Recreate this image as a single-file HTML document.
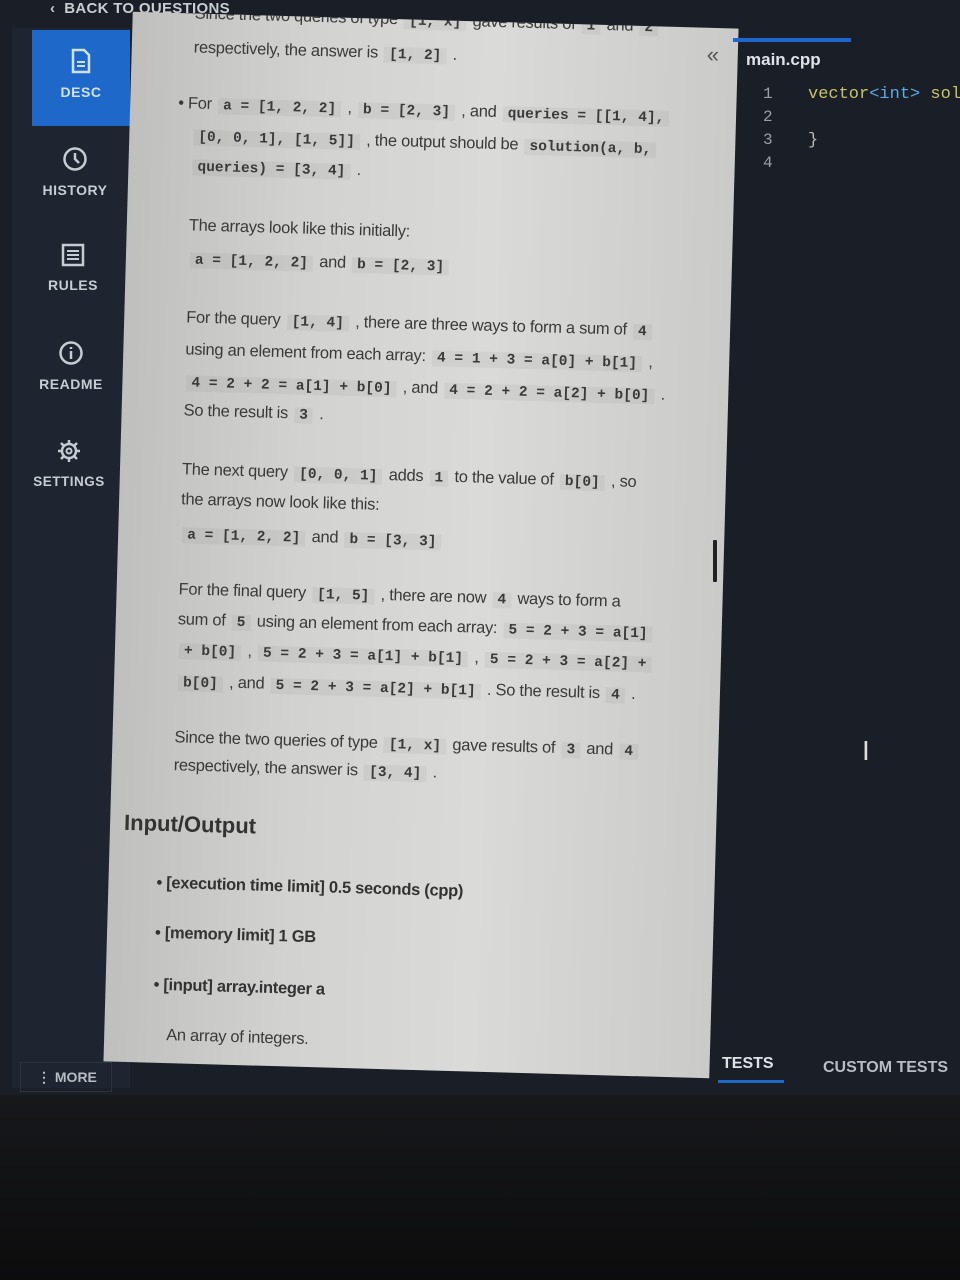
<!DOCTYPE html>
<html><head><meta charset="utf-8">
<style>
*{margin:0;padding:0;box-sizing:border-box}
body{width:960px;height:1280px;background:#111214;position:relative;overflow:hidden;font-family:"Liberation Sans",sans-serif}
.screen{position:absolute;left:0;top:0;width:960px;height:1095px;background:#1a1f27}
.bottom{position:absolute;left:0;top:1095px;width:960px;height:185px;background:linear-gradient(#17181b,#0c0c0d)}
.top{position:absolute;left:50px;top:0;color:#c9ccd2;font-weight:bold;font-size:15px;letter-spacing:.3px}
.side{position:absolute;left:12px;top:28px;width:118px;height:1060px;background:#1e2530}
.tab{position:absolute;width:98px;left:20px;height:96px;color:#c7ccd4;font-size:14px;font-weight:bold;text-align:center;letter-spacing:.5px}
.tab svg{display:block;margin:18px auto 10px}
.desc{background:#1e68c9;color:#cfe0f5}
.panel{position:absolute;left:118px;top:20px;width:606px;height:1050px;transform:rotate(1.6deg);transform-origin:50% 50%;background:linear-gradient(90deg,#bfbfbd,#d2d2d0 30%,#dadad8 60%,#cacac8);overflow:hidden;color:#3a3a3a;font-size:16.5px;letter-spacing:-.3px}
.c{font-family:"Liberation Mono",monospace;font-weight:bold;font-size:14.5px;color:#3a3a3a;letter-spacing:0;padding:0 5px;margin:0 2px;background:rgba(0,0,0,.04)}
p{position:absolute;line-height:29px;white-space:nowrap}
.h{font-size:22px;font-weight:bold;color:#333;letter-spacing:0}
.b{font-weight:bold;color:#333}
.ed{position:absolute;left:733px;top:38px;width:118px;height:4px;background:#1e68c9}
.fn{position:absolute;left:746px;top:50px;color:#dfe3e8;font-weight:bold;font-size:17px}
.ln{position:absolute;left:763px;color:#9aa0a8;font-family:"Liberation Mono",monospace;font-size:16px;line-height:23px;top:83px}
.code{position:absolute;left:808px;top:83px;font-family:"Liberation Mono",monospace;font-size:17px;line-height:23px;color:#c8c26a;white-space:pre}
</style></head><body>
<div class="screen"></div>
<div class="bottom"></div>
<div class="top">‹ &nbsp;BACK TO QUESTIONS</div>
<div class="side"></div>
<div class="tab desc" style="left:32px;top:30px"><svg width="22" height="26" viewBox="0 0 22 26"><path d="M3 2h11l5 5v17H3z" fill="none" stroke="#cfe0f5" stroke-width="2.5"/><path d="M7 14h8M7 18h8" stroke="#cfe0f5" stroke-width="2"/></svg>DESC</div>
<div class="tab" style="left:26px;top:128px"><svg width="26" height="26" viewBox="0 0 26 26"><circle cx="13" cy="13" r="10.5" fill="none" stroke="#c7ccd4" stroke-width="2.5"/><path d="M13 7v6l4 4" stroke="#c7ccd4" stroke-width="2.5" fill="none"/></svg>HISTORY</div>
<div class="tab" style="left:24px;top:225px"><svg width="24" height="24" viewBox="0 0 24 24"><rect x="2" y="2" width="20" height="20" fill="none" stroke="#c7ccd4" stroke-width="2.5"/><path d="M6 8h12M6 12h12M6 16h12" stroke="#c7ccd4" stroke-width="2"/></svg>RULES</div>
<div class="tab" style="left:22px;top:322px"><svg width="26" height="26" viewBox="0 0 26 26"><circle cx="13" cy="13" r="10.5" fill="none" stroke="#c7ccd4" stroke-width="2.5"/><path d="M13 11v8M13 7v2" stroke="#c7ccd4" stroke-width="2.5"/></svg>README</div>
<div class="tab" style="left:20px;top:420px;font-size:13.5px"><svg width="26" height="26" viewBox="0 0 26 26"><circle cx="13" cy="13" r="7" fill="none" stroke="#c7ccd4" stroke-width="2.5"/><circle cx="13" cy="13" r="2.5" fill="none" stroke="#c7ccd4" stroke-width="2"/><path d="M13 2v4M13 20v4M2 13h4M20 13h4M5 5l3 3M18 18l3 3M5 21l3-3M18 8l3-3" stroke="#c7ccd4" stroke-width="2.5"/></svg>SETTINGS</div>
<div style="position:absolute;left:20px;top:1062px;width:92px;height:30px;border:1px solid #2c333d;color:#b8bcc4;font-weight:bold;font-size:14px;padding:6px 0 0 16px">⋮ MORE</div>

<div class="panel">
<p style="left:62px;top:-14px">Since the two queries of type <span class="c">[1, x]</span> gave results of <span class="c">1</span> and <span class="c">2</span></p>
<p style="left:62px;top:20px">respectively, the answer is <span class="c">[1, 2]</span> .</p>
<div style="position:absolute;left:575px;top:14px;font-size:22px;color:#555">«</div>
<p style="left:48px;top:76px">• For <span class="c">a = [1, 2, 2]</span> , <span class="c">b = [2, 3]</span> , and <span class="c">queries = [[1, 4],</span></p>
<p style="left:62px;top:108px"><span class="c">[0, 0, 1], [1, 5]]</span> , the output should be <span class="c">solution(a, b,</span></p>
<p style="left:62px;top:138px"><span class="c">queries) = [3, 4]</span> .</p>
<p style="left:62px;top:198px">The arrays look like this initially:</p>
<p style="left:62px;top:231px"><span class="c">a = [1, 2, 2]</span> and <span class="c">b = [2, 3]</span></p>
<p style="left:62px;top:290px">For the query <span class="c">[1, 4]</span> , there are three ways to form a sum of <span class="c">4</span></p>
<p style="left:62px;top:322px">using an element from each array: <span class="c">4 = 1 + 3 = a[0] + b[1]</span> ,</p>
<p style="left:62px;top:354px"><span class="c">4 = 2 + 2 = a[1] + b[0]</span> , and <span class="c">4 = 2 + 2 = a[2] + b[0]</span> .</p>
<p style="left:62px;top:383px">So the result is <span class="c">3</span> .</p>
<p style="left:62px;top:442px">The next query <span class="c">[0, 0, 1]</span> adds <span class="c">1</span> to the value of <span class="c">b[0]</span> , so</p>
<p style="left:62px;top:472px">the arrays now look like this:</p>
<p style="left:62px;top:506px"><span class="c">a = [1, 2, 2]</span> and <span class="c">b = [3, 3]</span></p>
<p style="left:62px;top:562px">For the final query <span class="c">[1, 5]</span> , there are now <span class="c">4</span> ways to form a</p>
<p style="left:62px;top:592px">sum of <span class="c">5</span> using an element from each array: <span class="c">5 = 2 + 3 = a[1]</span></p>
<p style="left:62px;top:622px"><span class="c">+ b[0]</span> , <span class="c">5 = 2 + 3 = a[1] + b[1]</span> , <span class="c">5 = 2 + 3 = a[2] +</span></p>
<p style="left:62px;top:654px"><span class="c">b[0]</span> , and <span class="c">5 = 2 + 3 = a[2] + b[1]</span> . So the result is <span class="c">4</span> .</p>
<p style="left:62px;top:710px">Since the two queries of type <span class="c">[1, x]</span> gave results of <span class="c">3</span> and <span class="c">4</span></p>
<p style="left:62px;top:738px">respectively, the answer is <span class="c">[3, 4]</span> .</p>
<p class="h" style="left:14px;top:796px">Input/Output</p>
<p class="b" style="left:48px;top:856px">• [execution time limit] 0.5 seconds (cpp)</p>
<p class="b" style="left:48px;top:906px">• [memory limit] 1 GB</p>
<p class="b" style="left:48px;top:958px">• [input] array.integer a</p>
<p style="left:62px;top:1008px">An array of integers.</p>
</div>
<div style="position:absolute;left:711px;top:538px;width:8px;height:46px;border:2px solid #ccc;background:#222;border-radius:3px"></div>

<div class="ed"></div>
<div class="fn">main.cpp</div>
<div class="ln">1<br>2<br>3<br>4</div>
<div class="code">vector<span style="color:#5aa9e6">&lt;int&gt;</span> sol

<span style="color:#bbb">}</span></div>
<div style="position:absolute;left:862px;top:735px;color:#ddd;font-size:28px">I</div>
<div style="position:absolute;left:722px;top:1055px;color:#dfe3e8;font-weight:bold;font-size:16px">TESTS</div>
<div style="position:absolute;left:718px;top:1080px;width:66px;height:3px;background:#1e68c9"></div>
<div style="position:absolute;left:823px;top:1059px;color:#b8bcc4;font-weight:bold;font-size:16px;white-space:nowrap">CUSTOM TESTS</div>
</body></html>
